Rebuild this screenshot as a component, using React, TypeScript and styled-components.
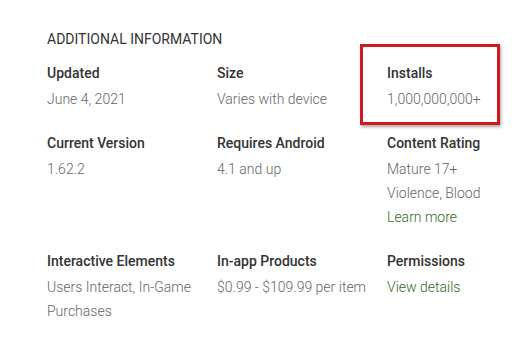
import React, { FC } from 'react';
import styled, { createGlobalStyle } from 'styled-components';

interface IInfoItem {
  label: string;
  values: string[];
  link?: string;
}

const items: IInfoItem[] = [
  { label: 'Updated', values: ['June 4, 2021'] },
  { label: 'Size', values: ['Varies with device'] },
  { label: 'Installs', values: ['1,000,000,000+'] },
  { label: 'Current Version', values: ['1.62.2'] },
  { label: 'Requires Android', values: ['4.1 and up'] },
  { label: 'Content Rating', values: ['Mature 17+', 'Violence, Blood'], link: 'Learn more' },
  { label: 'Interactive Elements', values: ['Users Interact, In-Game Purchases'] },
  { label: 'In-app Products', values: ['$0.99 - $109.99 per item'] },
  { label: 'Permissions', values: [], link: 'View details' },
];

const App: FC = () => (
  <>
    <GlobalStyle />
    <Section>
      <Title>Additional Information</Title>
      <Grid>
        {items.map(({ label, values, link }) => (
          <Item key={label}>
            <Label>{label}</Label>
            {values.map((v) => (
              <Value key={v}>{v}</Value>
            ))}
            {link && <Link>{link}</Link>}
          </Item>
        ))}
      </Grid>
      <Highlight />
    </Section>
  </>
);

export default App;

const GlobalStyle = createGlobalStyle`
  body {
    margin: 0;
    background: #fff;
    font-family: Roboto, "Liberation Sans", sans-serif;
  }
`;

const Section = styled.div`
  position: relative;
  width: 525px;
  height: 340px;
  padding: 29px 0 0 47px;
  box-sizing: border-box;
`;

const Title = styled.div`
  font-size: 14px;
  line-height: 20px;
  text-transform: uppercase;
  color: #333;
  margin-bottom: 11px;
`;

const Grid = styled.div`
  display: grid;
  grid-template-columns: 170px 170px 130px;
  row-gap: 19px;
`;

const Item = styled.div`
  display: flex;
  flex-direction: column;
`;

const Label = styled.div`
  font-size: 14px;
  font-weight: 500;
  line-height: 27px;
  color: #333;
`;

const Value = styled.div`
  font-size: 14px;
  font-weight: 300;
  line-height: 24px;
  color: #666;
  max-width: 150px;
`;

const Link = styled(Value)`
  color: #33691e;
  cursor: pointer;
`;

const Highlight = styled.div`
  position: absolute;
  left: 360px;
  top: 44px;
  width: 140px;
  height: 81px;
  box-sizing: border-box;
  border: 3px solid #cc1a1f;
  box-shadow: 1px 2px 3px rgba(0, 0, 0, 0.35);
`;
